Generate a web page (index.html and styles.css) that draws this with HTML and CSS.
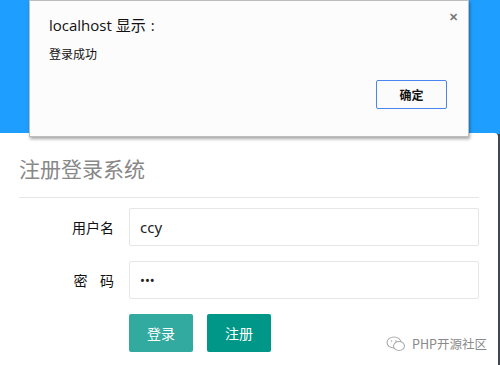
FILE: index.html
```html
<!DOCTYPE html>
<html lang="zh-CN">
<head>
    <meta charset="UTF-8">
    <title>注册登录系统</title>
    <link rel="stylesheet" href="styles.css">
</head>
<body>
    <div class="top"></div>

    <div class="card">
        <h2 class="title">注册登录系统</h2>
        <div class="form">
            <div class="form-item">
                <label class="form-label">用户名</label>
                <div class="input-block"><input class="input" type="text" value="ccy"></div>
            </div>
            <div class="form-item">
                <label class="form-label">密&nbsp;&nbsp;&nbsp;&nbsp;码</label>
                <div class="input-block"><input class="input pwd" type="password" value="ccy"></div>
            </div>
            <div class="form-item buttons">
                <button class="btn btn-hover">登录</button>
                <button class="btn">注册</button>
            </div>
        </div>
    </div>

    <!-- browser alert -->
    <div class="alert">
        <span class="alert-close">&#x2715;</span>
        <div class="alert-title">localhost 显示<span class="colon">:</span></div>
        <div class="alert-msg">登录成功</div>
        <div class="alert-foot"><button class="alert-ok">确定</button></div>
    </div>

    <div class="mark">
        <svg width="20" height="16" viewBox="0 0 20 16">
            <ellipse cx="8" cy="6.5" rx="7" ry="5.5" fill="none" stroke="#aaa" stroke-width="1.1"/>
            <ellipse cx="13" cy="10" rx="5.5" ry="4.5" fill="#fff" stroke="#aaa" stroke-width="1.1"/>
            <circle cx="5.5" cy="5" r="0.8" fill="#aaa"/>
            <circle cx="10" cy="5" r="0.8" fill="#aaa"/>
        </svg>
        <span>PHP开源社区</span>
    </div>
</body>
</html>
```

FILE: styles.css
```css
body {
    margin: 0;
    height: 365px;
    overflow: hidden;
    background: #3d4a56;
    font-family: "Noto Sans CJK SC", sans-serif;
    color: #333;
}
.top {
    height: 134px;
    background: #1e9fff;
    margin-bottom: -1px;
}
.card {
    position: relative;
    margin-right: 2px;
    height: 212px;
    padding: 20px 19px 0;
    background: #fff;
    border-top-right-radius: 4px;
}
.title {
    margin: 0;
    padding-bottom: 14px;
    border-bottom: 1px solid #e6e6e6;
    font-size: 21px;
    font-weight: normal;
    line-height: 30px;
    color: #888;
}
.form {
    padding-top: 10px;
}
.form-item {
    display: flex;
    margin-bottom: 15px;
}
.form-label {
    width: 80px;
    padding: 0 15px;
    line-height: 38px;
    text-align: right;
    font-size: 14px;
    color: #111;
}
.input-block {
    flex: 1;
}
.input {
    box-sizing: border-box;
    width: 100%;
    height: 38px;
    padding: 0 10px;
    border: 1px solid #e6e6e6;
    border-radius: 2px;
    font-family: "Noto Sans", sans-serif;
    font-size: 15px;
    color: #222;
    outline: none;
}
.pwd {
    font-size: 13px;
}
.buttons {
    padding-left: 110px;
    gap: 14px;
}
.btn {
    height: 38px;
    padding: 0 18px;
    border: none;
    border-radius: 2px;
    background: #009688;
    color: #fff;
    font-family: "Noto Sans CJK SC", sans-serif;
    font-size: 14px;
}
.btn-hover {
    opacity: 0.8;
}
.alert {
    position: absolute;
    left: 29px;
    top: 0;
    width: 438px;
    height: 135px;
    background: #fcfcfc;
    border: 1px solid #bdbdbd;
    box-shadow: 1px 2px 3px rgba(0, 0, 0, 0.35);
}
.alert-close {
    position: absolute;
    right: 10px;
    top: 7px;
    font-size: 11px;
    font-weight: bold;
    color: #777;
}
.alert-title {
    padding: 13px 0 0 19px;
    font-family: "Open Sans", "Noto Sans CJK SC", sans-serif;
    font-size: 15px;
    line-height: 22px;
    color: #111;
}
.colon {
    padding-left: 5px;
}
.alert-msg {
    padding: 9px 0 0 19px;
    font-size: 12px;
    line-height: 18px;
    color: #111;
}
.alert-foot {
    display: flex;
    justify-content: flex-end;
    padding: 17px 21px 0 0;
}
.alert-ok {
    width: 71px;
    height: 29px;
    border: 1px solid #4a86f0;
    border-radius: 2px;
    background: #fbfbfb;
    font-family: "Noto Sans CJK SC", sans-serif;
    font-size: 12px;
    font-weight: bold;
    color: #111;
}
.mark {
    position: absolute;
    left: 386px;
    top: 334px;
    display: flex;
    align-items: center;
    gap: 6px;
    font-size: 12.5px;
    color: #8a8a8a;
}
```
